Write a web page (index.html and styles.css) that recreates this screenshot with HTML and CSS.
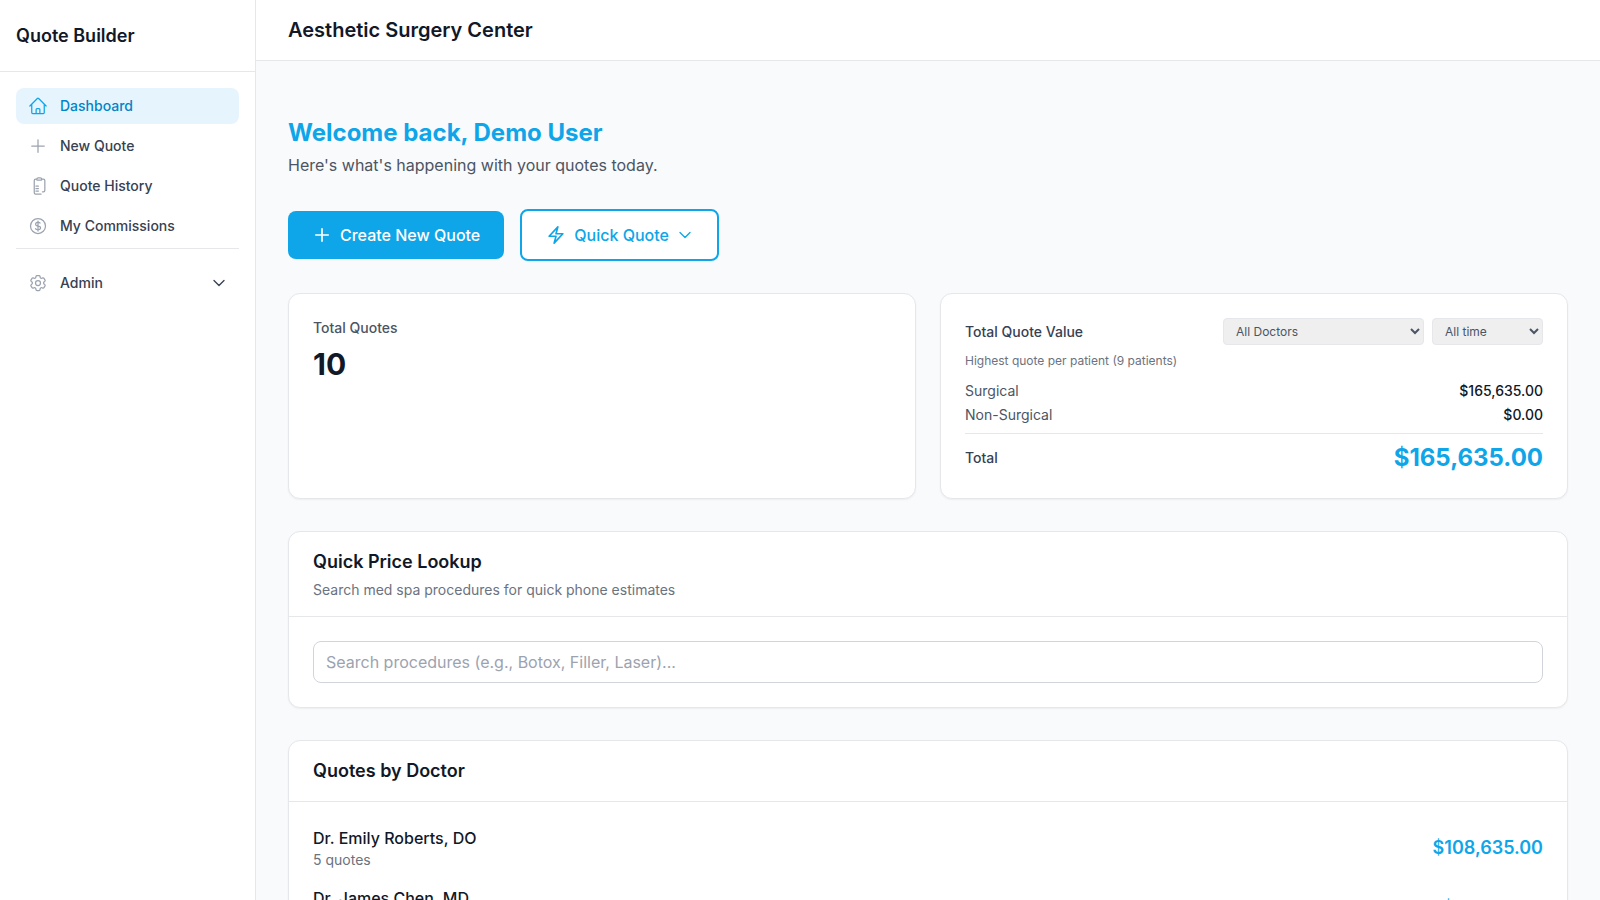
FILE: index.html
```html
<!DOCTYPE html>
<html lang="en">
<head>
  <meta charset="UTF-8"/>
  <meta name="viewport" content="width=device-width, initial-scale=1.0"/>
  <title>Dashboard - Quote Builder</title>
  <link rel="stylesheet" href="styles.css">
</head>
<body>

  <aside class="sidebar">
    <div class="brand">Quote Builder</div>
    <nav class="nav">
      <a class="nav-item active">
        <svg class="icon" viewBox="0 0 24 24"><path d="m2.25 12 8.954-8.955c.44-.439 1.152-.439 1.591 0L21.75 12M4.5 9.75v10.125c0 .621.504 1.125 1.125 1.125H9.75v-4.875c0-.621.504-1.125 1.125-1.125h2.25c.621 0 1.125.504 1.125 1.125V21h4.125c.621 0 1.125-.504 1.125-1.125V9.75M8.25 21h8.25"/></svg>
        Dashboard
      </a>
      <a class="nav-item">
        <svg class="icon" viewBox="0 0 24 24"><path d="M12 4.5v15m7.5-7.5h-15"/></svg>
        New Quote
      </a>
      <a class="nav-item">
        <svg class="icon" viewBox="0 0 24 24"><path d="M10.5 4.2c0-1 .8-1.9 1.8-1.9h2.4c1 0 1.8.9 1.8 1.9 0 .4-.3.7-.7.7h-4.6c-.4 0-.7-.3-.7-.7ZM16.5 3.6h2c1 0 1.7.8 1.7 1.7v12c0 1-.7 1.7-1.7 1.7h-1.2M10.5 3.6H9.2c-1 0-1.7.8-1.7 1.7V20c0 1 .7 1.7 1.7 1.7h6.5M9.5 12h3M9.5 15h3M9.5 18h3"/></svg>
        Quote History
      </a>
      <a class="nav-item">
        <svg class="icon" viewBox="0 0 24 24"><path d="M12 6v12m-3-2.818.879.659c1.171.879 3.07.879 4.242 0 1.172-.879 1.172-2.303 0-3.182C13.536 12.219 12.768 12 12 12c-.725 0-1.45-.22-2.003-.659-1.106-.879-1.106-2.303 0-3.182s2.9-.879 4.006 0l.415.33M21 12a9 9 0 1 1-18 0 9 9 0 0 1 18 0Z"/></svg>
        My Commissions
      </a>
      <div class="nav-divider"></div>
      <a class="nav-item">
        <svg class="icon" viewBox="0 0 24 24"><path d="M9.594 3.94c.09-.542.56-.94 1.11-.94h2.593c.55 0 1.02.398 1.11.94l.213 1.281c.063.374.313.686.645.87.074.04.147.083.22.127.325.196.72.257 1.075.124l1.217-.456a1.125 1.125 0 0 1 1.37.49l1.296 2.247a1.125 1.125 0 0 1-.26 1.431l-1.003.827c-.293.241-.438.613-.43.992a7.723 7.723 0 0 1 0 .255c-.008.378.137.75.43.991l1.004.827c.424.35.534.955.26 1.43l-1.298 2.247a1.125 1.125 0 0 1-1.369.491l-1.217-.456c-.355-.133-.75-.072-1.076.124a6.47 6.47 0 0 1-.22.128c-.331.183-.581.495-.644.869l-.213 1.281c-.09.543-.56.94-1.11.94h-2.594c-.55 0-1.019-.398-1.11-.94l-.213-1.281c-.062-.374-.312-.686-.644-.87a6.52 6.52 0 0 1-.22-.127c-.325-.196-.72-.257-1.076-.124l-1.217.456a1.125 1.125 0 0 1-1.369-.49l-1.297-2.247a1.125 1.125 0 0 1 .26-1.431l1.004-.827c.292-.24.437-.613.43-.991a6.932 6.932 0 0 1 0-.255c.007-.38-.138-.751-.43-.992l-1.004-.827a1.125 1.125 0 0 1-.26-1.43l1.297-2.247a1.125 1.125 0 0 1 1.37-.491l1.216.456c.356.133.751.072 1.076-.124.072-.044.146-.086.22-.128.332-.183.582-.495.644-.869l.214-1.28Z"/><circle cx="12" cy="12" r="3"/></svg>
        Admin
        <svg class="nav-chevron" viewBox="0 0 24 24"><path d="m4.5 8.25 7.5 7.5 7.5-7.5"/></svg>
      </a>
    </nav>
  </aside>

  <div class="page">
    <header class="topbar">
      <h1>Aesthetic Surgery Center</h1>
    </header>

    <main class="main">
      <h2 class="welcome">Welcome back, Demo User</h2>
      <p class="subtitle">Here's what's happening with your quotes today.</p>

      <div class="actions">
        <button class="btn btn-primary">
          <svg class="btn-icon" viewBox="0 0 24 24"><path d="M12 4.5v15m7.5-7.5h-15"/></svg>
          Create New Quote
        </button>
        <button class="btn btn-outline">
          <svg class="btn-icon" viewBox="0 0 24 24"><path d="m3.75 13.5 10.5-11.25L12 10.5h8.25L9.75 21.75 12 13.5H3.75Z"/></svg>
          Quick Quote
          <svg class="btn-chevron" viewBox="0 0 24 24"><path d="m4.5 8.25 7.5 7.5 7.5-7.5"/></svg>
        </button>
      </div>

      <div class="stats">
        <section class="card stat-card">
          <div class="stat-label">Total Quotes</div>
          <div class="stat-value">10</div>
        </section>

        <section class="card stat-card value-card">
          <div class="value-head">
            <div class="value-title">Total Quote Value</div>
            <select class="filter filter-doctor">
              <option>All Doctors</option>
            </select>
            <select class="filter filter-time">
              <option>All time</option>
            </select>
          </div>
          <div class="value-note">Highest quote per patient (9 patients)</div>
          <div class="value-row"><span>Surgical</span><strong>$165,635.00</strong></div>
          <div class="value-row"><span>Non-Surgical</span><strong>$0.00</strong></div>
          <div class="value-total">
            <span class="value-total-label">Total</span>
            <span class="value-amount">$165,635.00</span>
          </div>
        </section>
      </div>

      <section class="card panel">
        <div class="panel-head">
          <h3>Quick Price Lookup</h3>
          <p>Search med spa procedures for quick phone estimates</p>
        </div>
        <div class="panel-body">
          <input class="search" type="text" placeholder="Search procedures (e.g., Botox, Filler, Laser)..."/>
        </div>
      </section>

      <section class="card panel">
        <div class="panel-head">
          <h3>Quotes by Doctor</h3>
        </div>
        <div class="panel-body doctors">
          <div class="doctor">
            <div>
              <div class="doctor-name">Dr. Emily Roberts, DO</div>
              <div class="doctor-count">5 quotes</div>
            </div>
            <div class="doctor-amount">$108,635.00</div>
          </div>
          <div class="doctor">
            <div>
              <div class="doctor-name">Dr. James Chen, MD</div>
              <div class="doctor-count">5 quotes</div>
            </div>
            <div class="doctor-amount">$57,000.00</div>
          </div>
        </div>
      </section>
    </main>
  </div>

</body>
</html>
```

FILE: styles.css
```css
* {
  box-sizing: border-box;
}
body {
  margin: 0;
  height: 100vh;
  display: flex;
  overflow: hidden;
  background: #f9fafb;
  color: #111827;
  font-family: 'Inter', sans-serif;
}
svg {
  fill: none;
  stroke: currentColor;
  stroke-width: 1.5;
  stroke-linecap: round;
  stroke-linejoin: round;
  flex-shrink: 0;
}

/* sidebar */
.sidebar {
  width: 256px;
  flex-shrink: 0;
  background: #fff;
  border-right: 1px solid #e5e7eb;
}
.brand {
  height: 72px;
  padding: 0 16px;
  display: flex;
  align-items: center;
  border-bottom: 1px solid #e5e7eb;
  font-size: 18px;
  font-weight: 600;
}
.nav {
  padding: 16px;
}
.nav-item {
  height: 36px;
  margin-bottom: 4px;
  padding: 0 12px;
  display: flex;
  align-items: center;
  gap: 12px;
  border-radius: 8px;
  font-size: 14px;
  line-height: 20px;
  font-weight: 500;
  color: #374151;
}
.nav-item .icon {
  width: 20px;
  height: 20px;
  color: #9ca3af;
}
.nav-item.active {
  background: #e6f5fd;
  color: #0284c7;
}
.nav-item.active .icon {
  color: #0ea5e9;
}
.nav-divider {
  height: 1px;
  margin: 4px 0 16px;
  background: #e5e7eb;
}
.nav-chevron {
  width: 16px;
  height: 16px;
  margin-left: auto;
  stroke-width: 2;
}

/* main */
.page {
  flex: 1;
  min-width: 0;
  display: flex;
  flex-direction: column;
}
.topbar {
  height: 61px;
  flex-shrink: 0;
  padding: 0 32px;
  display: flex;
  align-items: center;
  background: #fff;
  border-bottom: 1px solid #e5e7eb;
}
.topbar h1 {
  margin: 0;
  font-size: 20px;
  font-weight: 600;
}
.main {
  flex: 1;
  overflow: hidden;
  padding: 56px 32px 32px;
}
.welcome {
  margin: 0;
  font-size: 24px;
  line-height: 32px;
  font-weight: 700;
  color: #0ea5e9;
}
.subtitle {
  margin: 4px 0 0;
  font-size: 16px;
  line-height: 24px;
  color: #4b5563;
}
.actions {
  margin-top: 32px;
  display: flex;
  align-items: center;
  gap: 16px;
}
.btn {
  display: flex;
  align-items: center;
  border-radius: 8px;
  font-family: inherit;
  font-size: 16px;
  font-weight: 500;
}
.btn-icon {
  width: 20px;
  height: 20px;
  stroke-width: 2;
}
.btn-primary {
  height: 48px;
  padding: 0 24px;
  gap: 8px;
  border: none;
  background: #0ea5e9;
  color: #fff;
}
.btn-outline {
  height: 52px;
  padding: 0 24px;
  gap: 8px;
  border: 2px solid #0ea5e9;
  background: #fff;
  color: #0ea5e9;
}
.btn-chevron {
  width: 16px;
  height: 16px;
  stroke-width: 2;
}

.card {
  background: #fff;
  border: 1px solid #e5e7eb;
  border-radius: 12px;
  box-shadow: 0 1px 2px rgba(0,0,0,0.05);
}
.stats {
  margin-top: 32px;
  display: grid;
  grid-template-columns: 1fr 1fr;
  gap: 24px;
}
.stat-card {
  height: 206px;
  padding: 24px;
}
.stat-label {
  font-size: 14px;
  line-height: 20px;
  font-weight: 500;
  color: #4b5563;
}
.stat-value {
  margin-top: 8px;
  font-size: 30px;
  line-height: 36px;
  font-weight: 700;
}
.value-head {
  display: flex;
  align-items: center;
  gap: 8px;
}
.value-title {
  flex: 1;
  font-size: 14px;
  font-weight: 500;
  color: #374151;
}
.filter {
  height: 27px;
  padding: 0 4px 0 8px;
  border: 1px solid #e5e7eb;
  border-radius: 4px;
  background: #efefef;
  font-family: inherit;
  font-size: 12px;
  color: #4b5563;
}
.filter-doctor {
  width: 201px;
}
.filter-time {
  width: 111px;
}
.value-note {
  margin-top: 8px;
  font-size: 12px;
  line-height: 16px;
  color: #6b7280;
}
.value-row {
  margin-top: 4px;
  display: flex;
  justify-content: space-between;
  font-size: 14px;
  line-height: 20px;
  color: #4b5563;
}
.value-note + .value-row {
  margin-top: 12px;
}
.value-row strong {
  font-weight: 500;
  color: #111827;
}
.value-total {
  margin-top: 8px;
  padding-top: 8px;
  display: flex;
  justify-content: space-between;
  align-items: center;
  border-top: 1px solid #e5e7eb;
  font-size: 14px;
  font-weight: 500;
  color: #374151;
}
.value-total-label {
  line-height: 20px;
}
.value-amount {
  font-size: 24px;
  line-height: 32px;
  font-weight: 700;
  color: #0ea5e9;
}

.panel {
  margin-top: 32px;
}
.panel-head {
  padding: 18px 24px;
  border-bottom: 1px solid #e5e7eb;
}
.panel-head h3 {
  margin: 0;
  font-size: 18px;
  line-height: 24px;
  font-weight: 600;
}
.panel-head p {
  margin: 6px 0 -2px;
  font-size: 14px;
  line-height: 20px;
  color: #6b7280;
}
.panel-body {
  padding: 24px;
}
.search {
  width: 100%;
  height: 42px;
  padding: 0 12px;
  border: 1px solid #d1d5db;
  border-radius: 8px;
  font-family: inherit;
  font-size: 16px;
}
.search::placeholder {
  color: #9ca3af;
}
.doctor {
  display: flex;
  justify-content: space-between;
  align-items: center;
  margin-bottom: 16px;
}
.doctor-name {
  font-size: 16px;
  line-height: 24px;
  font-weight: 500;
}
.doctor-count {
  font-size: 14px;
  line-height: 20px;
  color: #6b7280;
}
.doctor-amount {
  font-size: 18px;
  line-height: 28px;
  font-weight: 600;
  color: #0ea5e9;
}
```
